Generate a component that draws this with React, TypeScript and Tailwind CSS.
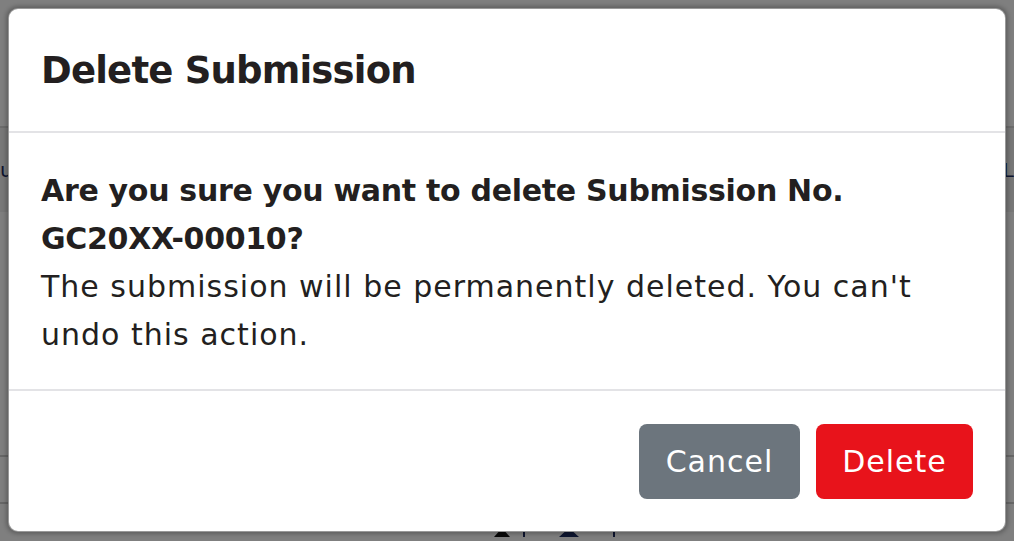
import React from 'react';

const font = { fontFamily: '"DejaVu Sans", "Noto Sans", sans-serif' };

function BackgroundPage() {
  return (
    <div className="flex h-full w-full flex-col bg-white" style={font}>
      <div className="h-[128px] border-b-2 border-[#d9d9d9]" />
      <div className="flex h-[84px] items-center justify-between bg-[#f0f0f0] text-[20px] text-[#1b2a5e]">
        <span>u</span>
        <span>L</span>
      </div>
      <div className="h-[245px] border-b-2 border-[#cfcfcf]" />
      <div className="h-[47px] border-b-2 border-[#cfcfcf]" />
      <div className="flex h-[33px] items-end">
        <div className="w-[480px]" />
        <div className="flex w-[43px] justify-center">
          <svg width="18" height="10" viewBox="0 0 18 10">
            <path d="M9 1 L17 10 L1 10 Z" fill="#111" />
          </svg>
        </div>
        <div className="h-full w-[2px] bg-[#1b2a5e]" />
        <div className="flex w-[88px] justify-center">
          <svg width="22" height="10" viewBox="0 0 22 10">
            <path d="M11 1 L21 10 L1 10 Z" fill="#1b2a5e" />
          </svg>
        </div>
        <div className="h-full w-[2px] bg-[#1b2a5e]" />
      </div>
    </div>
  );
}

export default function App() {
  return (
    <div className="relative h-[541px] w-full overflow-hidden">
      <BackgroundPage />
      <div className="absolute inset-0 bg-black/50">
        <div
          className="ml-[8px] mt-[8px] w-[998px] overflow-hidden rounded-[10px] border border-black/40 bg-white shadow-[0_0_4px_2px_rgba(0,0,0,0.25)]"
          style={font}
        >
          <div className="border-b-2 border-[#e3e3e6] px-[32px] pb-[30px] pt-[32px]">
            <h5 className="text-[37px] font-bold leading-[60px] tracking-[-0.8px] text-[#231f20]">
              Delete Submission
            </h5>
          </div>
          <div className="border-b-2 border-[#e3e3e6] px-[32px] pb-[30px] pt-[34px] text-[30px] leading-[48px] text-[#231f20]">
            <p className="font-bold tracking-[-0.3px]">
              Are you sure you want to delete Submission No.
              <br />
              GC20XX-00010?
            </p>
            <p className="tracking-[1px]">
              The submission will be permanently deleted. You can't
              <br />
              undo this action.
            </p>
          </div>
          <div className="flex justify-end gap-[16px] px-[32px] pb-[32px] pt-[33px]">
            <button className="h-[75px] w-[161px] rounded-[8px] bg-[#6c757d] text-[30px] tracking-[1px] text-white">
              Cancel
            </button>
            <button className="h-[75px] w-[157px] rounded-[8px] bg-[#e8131b] text-[30px] tracking-[1px] text-white">
              Delete
            </button>
          </div>
        </div>
      </div>
    </div>
  );
}
